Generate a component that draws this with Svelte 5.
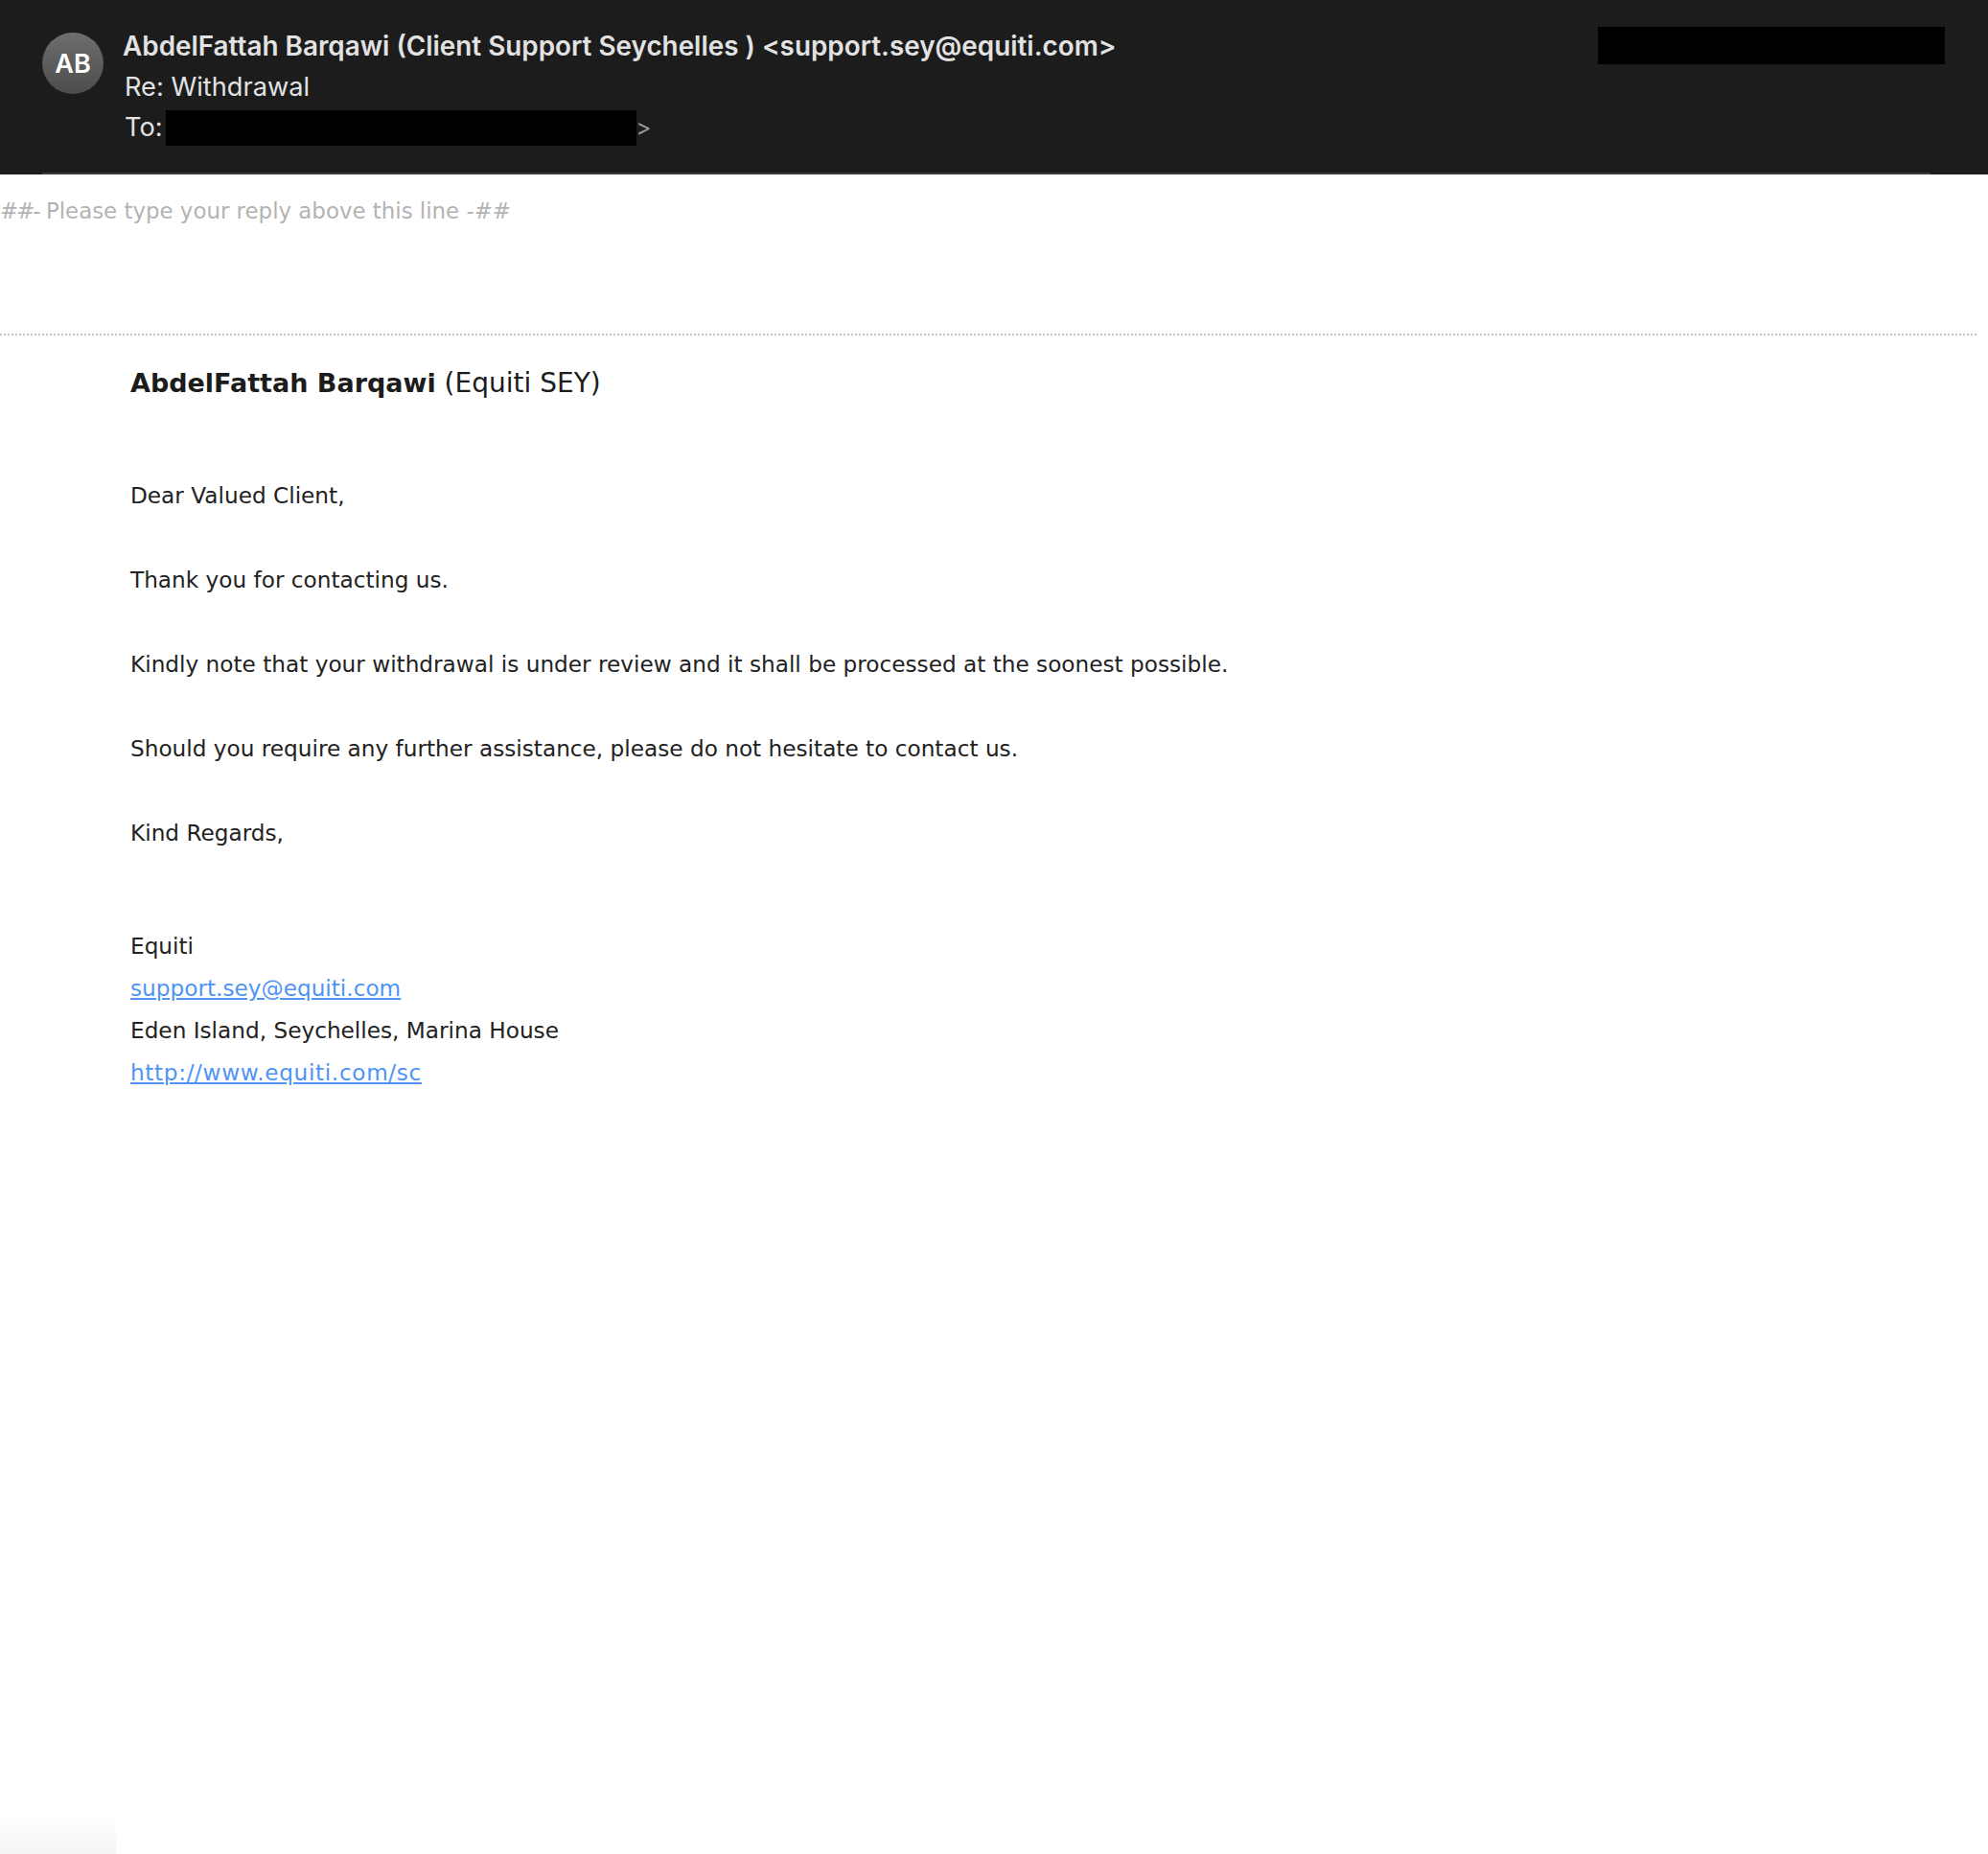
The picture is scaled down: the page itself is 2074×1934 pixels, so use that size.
<script>
  const paragraphs = [
    "Dear Valued Client,",
    "Thank you for contacting us.",
    "Kindly note that your withdrawal is under review and it shall be processed at the soonest possible.",
    "Should you require any further assistance, please do not hesitate to contact us.",
    "Kind Regards,"
  ];
</script>

<div class="page">
  <header class="head">
    <div class="avatar">AB</div>
    <div class="meta">
      <div class="from">AbdelFattah Barqawi (Client Support Seychelles ) &lt;support.sey@equiti.com&gt;</div>
      <div class="subject">Re: Withdrawal</div>
      <div class="to">To:<span class="redact to-redact"></span><span class="gt">&gt;</span></div>
    </div>
    <div class="redact date-redact"></div>
  </header>

  <div class="reply-line"><span class="mark">##-</span> Please type your reply above this line -##</div>
  <div class="divider"></div>

  <main class="body">
    <h2 class="author"><strong>AbdelFattah Barqawi</strong> (Equiti SEY)</h2>
    {#each paragraphs as text}
      <p>{text}</p>
    {/each}
    <div class="signature">
      <div>Equiti</div>
      <div><a href="mailto:support.sey@equiti.com">support.sey@equiti.com</a></div>
      <div>Eden Island, Seychelles, Marina House</div>
      <div><a class="url" href="http://www.equiti.com/sc">http://www.equiti.com/sc</a></div>
    </div>
  </main>

  <div class="corner"></div>
</div>

<style>
  :global(body) {
    margin: 0;
    background: #fff;
  }

  .page {
    position: relative;
    height: 1934px;
    overflow: hidden;
    font-family: "DejaVu Sans", sans-serif;
  }

  .head {
    position: relative;
    display: flex;
    height: 182px;
    box-sizing: border-box;
    padding: 27px 45px 0 44px;
    background: #1c1c1c;
    font-family: Inter, sans-serif;
    color: #e2e2e2;
  }

  .head::after {
    content: "";
    position: absolute;
    left: 44px;
    right: 60px;
    bottom: 0;
    height: 2px;
    background: #3a3a3a;
  }

  .avatar {
    display: flex;
    align-items: center;
    justify-content: center;
    width: 64px;
    height: 64px;
    margin-top: 7px;
    border-radius: 50%;
    background: linear-gradient(#6e6e6e, #4c4c4c);
    color: #fff;
    font-size: 27px;
    font-weight: 600;
  }

  .meta {
    flex: 1;
    margin-left: 20px;
    font-size: 27.85px;
    line-height: 42px;
  }

  .from {
    font-weight: 600;
    white-space: nowrap;
    margin-bottom: 1px;
  }

  .subject,
  .to {
    margin-left: 2px;
    font-size: 27.2px;
  }

  .to {
    display: flex;
    align-items: center;
  }

  .redact {
    display: block;
    background: #000;
  }

  .to-redact {
    width: 491px;
    height: 37px;
    margin-left: 3px;
  }

  .gt {
    color: #999;
    font-size: 24px;
  }

  .date-redact {
    width: 362px;
    height: 39px;
    margin-top: 1px;
  }

  .reply-line {
    padding-top: 20px;
    color: #b3b3b3;
    font-size: 22.9px;
    line-height: 36px;
  }

  .mark {
    letter-spacing: -2px;
  }

  .divider {
    width: 2062px;
    margin-top: 110px;
    border-top: 2px dotted #c4c4c4;
  }

  .body {
    padding: 28px 0 0 136px;
    color: #222;
    font-size: 23.2px;
    line-height: 44px;
  }

  .author {
    margin: 0 0 73px;
    color: #1c1c1c;
    font-size: 28px;
    font-weight: 400;
    line-height: 44px;
  }

  .author strong {
    font-size: 27px;
  }

  p {
    margin: 0 0 44px;
  }

  .signature {
    margin-top: 74px;
  }

  a {
    color: #4f94f5;
  }

  .url {
    letter-spacing: 0.65px;
  }

  .corner {
    position: absolute;
    left: 0;
    bottom: 0;
    width: 121px;
    height: 40px;
    background: linear-gradient(#ffffff, #f5f5f5);
  }
</style>
